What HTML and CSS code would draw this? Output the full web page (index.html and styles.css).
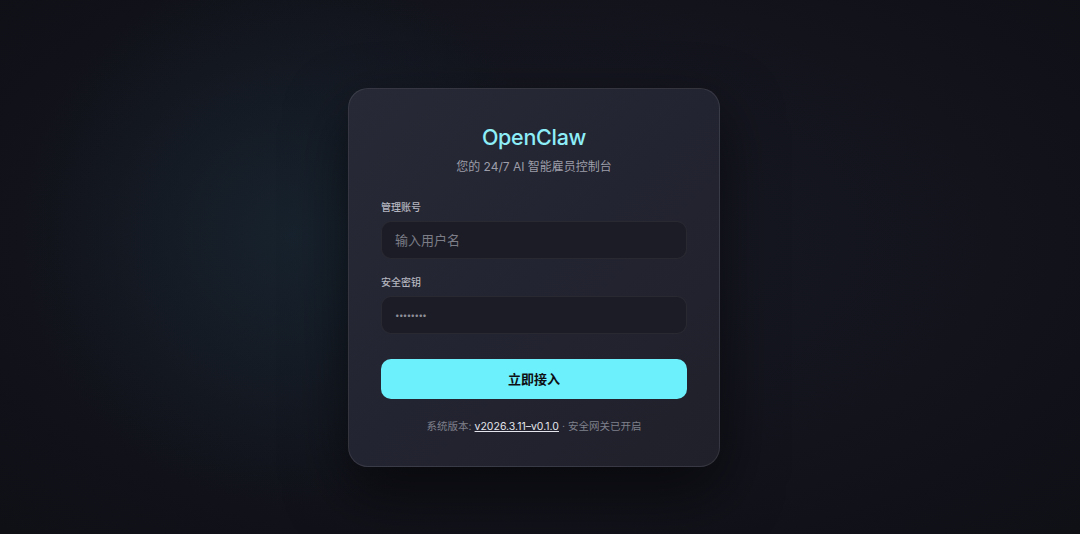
FILE: index.html
```html
<!DOCTYPE html>
<html lang="zh-CN">

<head>
  <meta charset="UTF-8">
  <meta name="viewport" content="width=device-width, initial-scale=1.0">
  <title>OpenClaw 登录</title>
  <link rel="stylesheet" href="styles.css">
</head>

<body>
  <!-- Login card -->
  <div class="login-card">
    <div class="brand">
      <h1 class="brand-title">OpenClaw</h1>
      <p class="brand-sub">您的 24/7 AI 智能雇员控制台</p>
    </div>

    <form class="login-form" onsubmit="return false;">
      <div class="field">
        <label for="username">管理账号</label>
        <input id="username" type="text" placeholder="输入用户名">
      </div>
      <div class="field">
        <label for="password">安全密钥</label>
        <input id="password" type="password" value="openclaw">
      </div>
      <button class="submit" type="submit">立即接入</button>
    </form>

    <p class="footer">系统版本: <a href="#">v2026.3.11–v0.1.0</a> · 安全网关已开启</p>
  </div>
</body>

</html>
```

FILE: styles.css
```css
/* Page background with a faint teal glow on the left */
body {
  margin: 0;
  height: 534px;
  box-sizing: border-box;
  padding: 20px 12px 0 0;
  display: flex;
  justify-content: center;
  align-items: center;
  font-family: Inter, "Noto Sans CJK SC", sans-serif;
  background:
    radial-gradient(circle at 27% 44%, rgba(26, 52, 66, 0.4), rgba(26, 52, 66, 0) 32%),
    radial-gradient(ellipse at 50% 45%, #181a25 0%, #12131b 60%, #0f1016 100%);
  overflow: hidden;
}

/* Card */
.login-card {
  width: 372px;
  box-sizing: border-box;
  padding: 35px 32px 31px;
  border: 1px solid rgba(255, 255, 255, 0.09);
  border-radius: 20px;
  background: linear-gradient(135deg, #272a36 0%, #232431 50%, #1f2029 100%);
  box-shadow: 0 24px 60px rgba(0, 0, 0, 0.55);
}

.brand {
  text-align: center;
  margin-bottom: 23px;
}

.brand-title {
  margin: 0;
  font-size: 21.5px;
  line-height: 26px;
  font-weight: 500;
  letter-spacing: -0.3px;
  color: #8eeef8;
}

.brand-sub {
  margin: 8px 0 0;
  font-size: 12px;
  line-height: 18px;
  color: #9c9da8;
}

/* Form fields */
.field {
  display: flex;
  flex-direction: column;
  gap: 6px;
  margin-bottom: 15px;
}

.field label {
  font-size: 10px;
  line-height: 16px;
  font-weight: 500;
  color: #b4b5bf;
}

.field input {
  height: 38px;
  box-sizing: border-box;
  padding: 0 13px;
  border: 1px solid rgba(255, 255, 255, 0.06);
  border-radius: 10px;
  background: #1b1c25;
  font-family: inherit;
  font-size: 13px;
  color: #8d8e98;
  outline: none;
}

.field input::placeholder {
  color: #7c7d87;
}

.field input[type="password"] {
  font-size: 8px;
  letter-spacing: -0.6px;
}

/* Primary button */
.submit {
  width: 100%;
  height: 40px;
  margin-top: 10px;
  border: none;
  border-radius: 10px;
  background: #6cf0fb;
  font-family: inherit;
  font-size: 13px;
  font-weight: 700;
  color: #0e0f14;
  cursor: pointer;
}

/* Footer line */
.footer {
  margin: 20px 0 0;
  text-align: center;
  font-size: 10.5px;
  line-height: 16px;
  color: #7f808b;
}

.footer a {
  color: #e4e5ec;
  text-decoration: underline;
}
```
